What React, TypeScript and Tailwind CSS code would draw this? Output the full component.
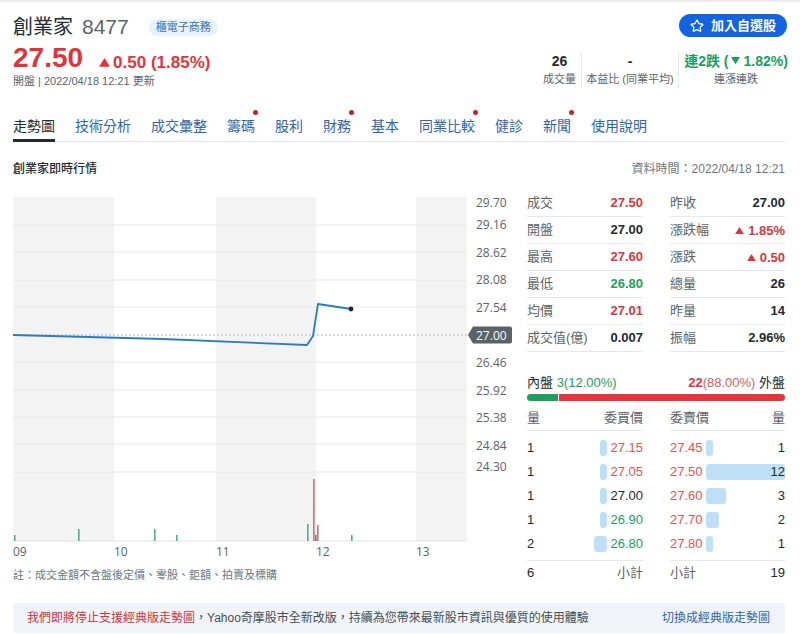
import React from "react";
import { Star } from "lucide-react";

const RED = "#e0343c";
const GREEN = "#1a9e63";

function Tri({ down = false, color, size = 9 }: { down?: boolean; color: string; size?: number }) {
  return (
    <svg width={size} height={size * 0.8} viewBox="0 0 10 8" className="inline-block">
      {down ? <polygon points="0,0 10,0 5,8" fill={color} /> : <polygon points="0,8 10,8 5,0" fill={color} />}
    </svg>
  );
}

const tabs = [
  { t: "走勢圖", active: true },
  { t: "技術分析" },
  { t: "成交彙整" },
  { t: "籌碼", dot: true },
  { t: "股利" },
  { t: "財務", dot: true },
  { t: "基本" },
  { t: "同業比較", dot: true },
  { t: "健診" },
  { t: "新聞", dot: true },
  { t: "使用說明" },
];

function Chart() {
  const grid = [35, 62, 90, 117, 172, 200, 227, 254, 282];
  const labels: [string, number][] = [
    ["29.70", 12],
    ["29.16", 34],
    ["28.62", 62],
    ["28.08", 89],
    ["27.54", 117],
    ["26.46", 172],
    ["25.92", 200],
    ["25.38", 227],
    ["24.84", 255],
    ["24.30", 276],
  ];
  const vols: [number, number, string][] = [
    [1, 6, "#4cb391"],
    [65, 12, "#4cb391"],
    [141, 12, "#4cb391"],
    [163, 6, "#4cb391"],
    [294, 17, "#4cb391"],
    [300, 62, "#e36a6a"],
    [302, 6, "#777"],
    [304, 16, "#e36a6a"],
    [338, 6, "#4cb391"],
  ];
  return (
    <svg width="500" height="370" viewBox="0 0 500 370" className="block">
      <rect x="0" y="7" width="101" height="344" fill="#f3f3f3" />
      <rect x="203" y="7" width="100" height="344" fill="#f3f3f3" />
      <rect x="403" y="7" width="51" height="344" fill="#f3f3f3" />
      {grid.map((y) => (
        <line key={y} x1="0" x2="454" y1={y} y2={y} stroke="#e8e8e8" strokeWidth="1" />
      ))}
      <line x1="0" x2="454" y1="351" y2="351" stroke="#e3e3e3" strokeWidth="1" />
      <line x1="0" x2="455" y1="145" y2="145" stroke="#b0b0b0" strokeWidth="1" strokeDasharray="2,2" />
      {vols.map(([x, h, c], i) => (
        <rect key={i} x={x} y={351 - h} width="1.6" height={h} fill={c} />
      ))}
      <polyline
        points="0,145 150,149 294,155 300,146 305,114 338,119"
        fill="none"
        stroke="#2a7dbf"
        strokeWidth="1.8"
        strokeLinejoin="round"
      />
      <circle cx="338" cy="119" r="2.4" fill="#222" />
      {labels.map(([t, y]) => (
        <text key={t} x="463" y={y} dominantBaseline="central" fontSize="12" fill="#5b636a" fontFamily="Open Sans, Liberation Sans, sans-serif">
          {t}
        </text>
      ))}
      <path d="M455,145 L460,136.5 L497,136.5 Q499,136.5 499,138.5 L499,151.5 Q499,153.5 497,153.5 L460,153.5 Z" fill="#5b636a" />
      <text x="463" y="145" dominantBaseline="central" fontSize="12" fill="#fff" fontFamily="Open Sans, Liberation Sans, sans-serif">
        27.00
      </text>
      {[
        ["09", 0],
        ["10", 101],
        ["11", 203],
        ["12", 303],
        ["13", 403],
      ].map(([t, x]) => (
        <text key={t as string} x={x as number} y="361" dominantBaseline="central" fontSize="12" fill="#5b636a" fontFamily="Open Sans, Liberation Sans, sans-serif">
          {t}
        </text>
      ))}
    </svg>
  );
}

const leftRows: [string, React.ReactNode, string][] = [
  ["成交", "27.50", RED],
  ["開盤", "27.00", "#232a31"],
  ["最高", "27.60", RED],
  ["最低", "26.80", GREEN],
  ["均價", "27.01", RED],
  ["成交值(億)", "0.007", "#232a31"],
];

const rightRows: [string, React.ReactNode, string][] = [
  ["昨收", "27.00", "#232a31"],
  [
    "漲跌幅",
    <span className="inline-flex items-center gap-[4px]">
      <Tri color={RED} size={9} />
      1.85%
    </span>,
    RED,
  ],
  [
    "漲跌",
    <span className="inline-flex items-center gap-[4px]">
      <Tri color={RED} size={9} />
      0.50
    </span>,
    RED,
  ],
  ["總量", "26", "#232a31"],
  ["昨量", "14", "#232a31"],
  ["振幅", "2.96%", "#232a31"],
];

const bids: [number, string, string][] = [
  [1, "27.15", "#e05555"],
  [1, "27.05", "#e05555"],
  [1, "27.00", "#232a31"],
  [1, "26.90", GREEN],
  [2, "26.80", GREEN],
];
const asks: [string, number][] = [
  ["27.45", 1],
  ["27.50", 12],
  ["27.60", 3],
  ["27.70", 2],
  ["27.80", 1],
];
const MAXW = 79;

function InfoCol({ rows }: { rows: [string, React.ReactNode, string][] }) {
  return (
    <div className="flex flex-col">
      {rows.map(([l, v, c], i) => (
        <div key={i} className="h-[27px] flex items-center justify-between border-b border-[#e6e9ec]">
          <span className="text-[13px] text-[#5b636a]">{l}</span>
          <span className="text-[13px] font-bold" style={{ color: c }}>
            {v}
          </span>
        </div>
      ))}
    </div>
  );
}

export default function App() {
  return (
    <div className="w-[800px] h-[634px] bg-white overflow-hidden text-[#232a31] font-['Liberation_Sans','Noto_Sans_CJK_TC',sans-serif]">
      <div className="h-[3px] bg-gradient-to-b from-[#e4e4e4] to-white" />
      {/* header row 1 */}
      <div className="px-[13px] pt-[10px] flex justify-between items-start">
        <div className="flex items-center h-[28px]">
          <span className="text-[20px] leading-[28px] text-[#232a31]">創業家</span>
          <span className="text-[21px] leading-[28px] text-[#5b636a] ml-[9px]">8477</span>
          <span className="ml-[20px] h-[17px] px-[7px] rounded-full bg-[#e8f2fc] text-[#3a72b5] text-[11px] leading-[17px]">
            櫃電子商務
          </span>
        </div>
        <button className="mt-[1px] w-[108px] h-[23px] rounded-full bg-[#1264e3] text-white flex items-center justify-center gap-[7px] text-[13px] font-bold">
          <Star size={14} strokeWidth={2.2} />
          加入自選股
        </button>
      </div>
      {/* header row 2 */}
      <div className="px-[13px] mt-[1px] flex justify-between items-end">
        <div>
          <div className="flex items-baseline h-[32px]">
            <span className="text-[28px] leading-[32px] font-bold" style={{ color: RED }}>
              27.50
            </span>
            <span className="ml-[16px] inline-flex items-center gap-[3px] text-[17px] font-bold" style={{ color: RED }}>
              <Tri color={RED} size={11} />
              0.50 (1.85%)
            </span>
          </div>
          <div className="text-[11px] leading-[14px] text-[#5b636a]">開盤 | 2022/04/18 12:21 更新</div>
        </div>
        <div className="flex items-stretch h-[36px]">
          <div className="w-[43px] flex flex-col items-center">
            <span className="text-[14px] leading-[18px] font-bold">26</span>
            <span className="text-[11px] leading-[18px] text-[#5b636a]">成交量</span>
          </div>
          <div className="w-px bg-[#e6e9ec]" />
          <div className="w-[96px] flex flex-col items-center">
            <span className="text-[14px] leading-[18px] font-bold">-</span>
            <span className="text-[11px] leading-[18px] text-[#5b636a]">本益比 (同業平均)</span>
          </div>
          <div className="w-px bg-[#e6e9ec]" />
          <div className="w-[108px] pl-[6px] flex flex-col items-center">
            <span className="whitespace-nowrap text-[14px] leading-[18px] font-bold inline-flex items-center gap-[2px]" style={{ color: GREEN }}>
              連2跌 (<Tri down color={GREEN} size={9} />
              <span className="ml-[2px]">1.82%)</span>
            </span>
            <span className="text-[11px] leading-[18px] text-[#5b636a]">連漲連跌</span>
          </div>
        </div>
      </div>
      {/* tabs */}
      <div className="mx-[13px] w-[772px] mt-[18px] h-[36px] flex gap-[20px] border-b border-[#e0e4e9]">
        {tabs.map((tb) => (
          <div key={tb.t} className="relative h-full pt-[8px]">
            <span className={"text-[14px] leading-[20px] " + (tb.active ? "text-[#232a31]" : "text-[#2f64ad]")}>{tb.t}</span>
            {tb.dot && <span className="absolute top-[4px] -right-[3px] w-[5px] h-[5px] rounded-full bg-[#c8202f]" />}
            {tb.active && <span className="absolute left-0 right-0 bottom-[-1px] h-[3px] bg-[#232a31]" />}
          </div>
        ))}
      </div>
      {/* section title */}
      <div className="mx-[13px] w-[772px] mt-[18px] flex justify-between text-[12px] leading-[18px]">
        <span className="font-medium text-[#232a31]">創業家即時行情</span>
        <span className="text-[#6e7780]">資料時間：2022/04/18 12:21</span>
      </div>
      {/* main */}
      <div className="ml-[13px] mt-[12px] flex">
        <div className="w-[500px]">
          <Chart />
          <div className="mt-[7px] text-[11px] leading-[16px] text-[#6e7780]">註：成交金額不含盤後定價、零股、鉅額、拍賣及標購</div>
        </div>
        <div className="ml-[14px] w-[258px]">
          <div className="flex gap-[27px]">
            <div className="w-[116px]">
              <InfoCol rows={leftRows} />
            </div>
            <div className="w-[115px]">
              <InfoCol rows={rightRows} />
            </div>
          </div>
          <div className="mt-[22px] flex justify-between text-[13px] leading-[18px]">
            <span>
              <span className="text-[#232a31]">內盤 </span>
              <span style={{ color: GREEN }}>3(12.00%)</span>
            </span>
            <span>
              <span className="font-bold" style={{ color: RED }}>
                22
              </span>
              <span className="text-[#e05a5a]">(88.00%)</span>
              <span className="text-[#232a31]"> 外盤</span>
            </span>
          </div>
          <div className="mt-[2px] h-[7px] flex rounded-full overflow-hidden">
            <div className="w-[31px] bg-[#1f9d5c]" />
            <div className="w-px bg-white" />
            <div className="flex-1 bg-[#e8343c]" />
          </div>
          <div className="mt-[4px] flex gap-[27px]">
            <div className="w-[116px]">
              <div className="h-[26px] flex items-center justify-between border-b border-[#e6e9ec] text-[13px] text-[#5b636a]">
                <span>量</span>
                <span>委買價</span>
              </div>
              <div className="pt-[5px]">
                {bids.map(([q, p, c], i) => (
                  <div key={i} className="h-[24px] flex items-center text-[13px]">
                    <span className="flex-1 text-[#232a31]">{q}</span>
                    <div className="h-[16px] rounded-[3px] bg-[#bfe1f8]" style={{ width: (q / 12) * MAXW }} />
                    <span className="w-[36px] text-right" style={{ color: c }}>
                      {p}
                    </span>
                  </div>
                ))}
              </div>
              <div className="mt-[4px] h-[24px] border-t border-[#e6e9ec] flex items-center justify-between text-[13px]">
                <span>6</span>
                <span className="text-[#5b636a]">小計</span>
              </div>
            </div>
            <div className="w-[115px]">
              <div className="h-[26px] flex items-center justify-between border-b border-[#e6e9ec] text-[13px] text-[#5b636a]">
                <span>委賣價</span>
                <span>量</span>
              </div>
              <div className="pt-[5px]">
                {asks.map(([p, q], i) => (
                  <div key={i} className="h-[24px] flex items-center text-[13px]">
                    <span className="w-[36px] text-[#e05555]">{p}</span>
                    <div className="relative flex-1 h-[16px] flex items-center justify-end">
                      <div className="absolute left-0 top-0 h-[16px] rounded-[3px] bg-[#bfe1f8]" style={{ width: (q / 12) * MAXW }} />
                      <span className="relative text-[#232a31]">{q}</span>
                    </div>
                  </div>
                ))}
              </div>
              <div className="mt-[4px] h-[24px] border-t border-[#e6e9ec] flex items-center justify-between text-[13px]">
                <span className="text-[#5b636a]">小計</span>
                <span>19</span>
              </div>
            </div>
          </div>
        </div>
      </div>
      {/* banner */}
      <div className="mx-[13px] w-[772px] mt-[19px] h-[30px] bg-[#f0f4f8] flex items-center justify-between pl-[14px] pr-[15px] text-[12px]">
        <span>
          <span className="text-[#d0333b]">我們即將停止支援經典版走勢圖</span>
          <span className="text-[#464e56]">，Yahoo奇摩股市全新改版，持續為您帶來最新股市資訊與優質的使用體驗</span>
        </span>
        <span className="text-[#2f64ad]">切換成經典版走勢圖</span>
      </div>
    </div>
  );
}
